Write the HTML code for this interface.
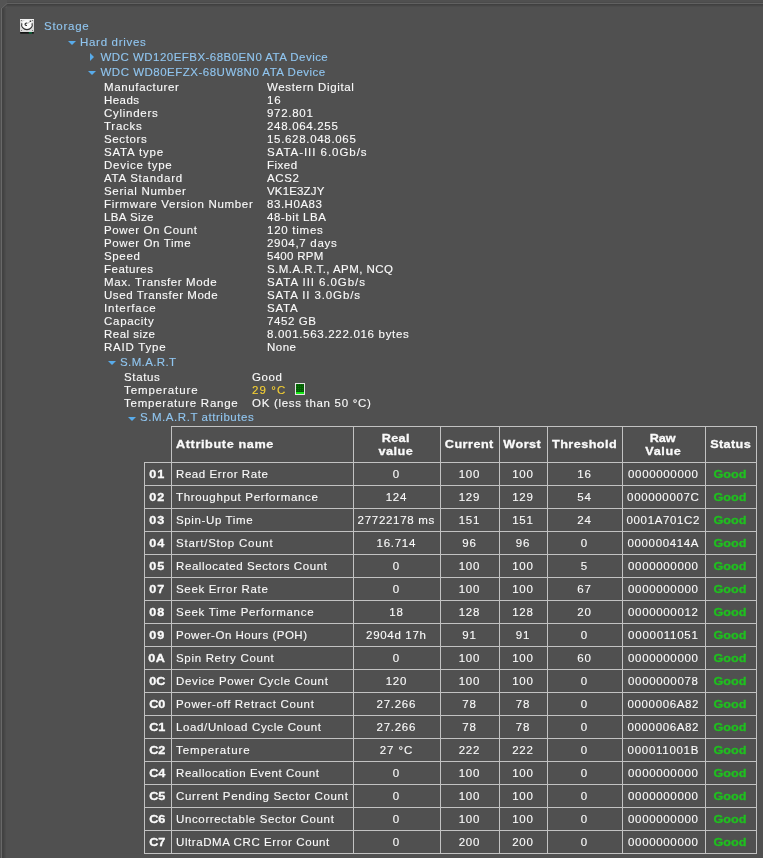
<!DOCTYPE html>
<html><head><meta charset="utf-8"><title>Storage</title>
<style>
html,body{margin:0;padding:0;}
body{width:763px;height:858px;overflow:hidden;background:#505050;position:relative;font-family:"Liberation Sans",sans-serif;font-size:11.5px;line-height:13px;color:#fafafa;letter-spacing:0.55px;}
#wrap{-webkit-text-stroke:0.12px;}
.t{position:absolute;white-space:nowrap;height:13px;}
.b{color:#90c5ef;}
.y{color:#f4cf34;}
.ad{position:absolute;width:0;height:0;margin-left:-0.5px;border-left:4px solid transparent;border-right:4px solid transparent;border-top:4.5px solid #58abea;}
.ar{position:absolute;width:0;height:0;margin-top:-0.5px;border-top:4px solid transparent;border-bottom:4px solid transparent;border-left:4.5px solid #58abea;}
.f{position:absolute;}
table{position:absolute;left:144px;top:426px;border-collapse:collapse;table-layout:fixed;}
td,th{border:1px solid #c2c2c2;padding:0 2px 0 0;height:22px;text-align:center;overflow:hidden;white-space:nowrap;}
th{font-weight:bold;-webkit-text-stroke:0.3px;}
td.n{text-align:left;padding:0 0 0 4px;}
td.g{color:#1fc01f;font-weight:bold;-webkit-text-stroke:0.3px;}
td.i{font-weight:bold;-webkit-text-stroke:0.3px;}
th.e{border:none;border-bottom:1px solid #c2c2c2;border-right:1px solid #c2c2c2;}
</style></head><body><div id="wrap" style="position:absolute;left:0;top:0;width:763px;height:858px;will-change:transform;">

<div class="f" style="left:6px;top:2px;width:757px;height:1px;background:#4b4b4b"></div>
<div class="f" style="left:6px;top:3px;width:757px;height:1px;background:#616161"></div>
<div class="f" style="left:6px;top:4px;width:757px;height:1px;background:#404040"></div>
<div class="f" style="left:6px;top:5px;width:757px;height:1px;background:#464646"></div>
<div class="f" style="left:6px;top:6px;width:757px;height:1px;background:#4c4c4c"></div>
<div class="f" style="left:1px;top:8px;width:1px;height:850px;background:#686868"></div>
<div class="f" style="left:2px;top:8px;width:1px;height:850px;background:#424242"></div>
<div class="f" style="left:3px;top:8px;width:1px;height:850px;background:#434343"></div>
<div class="f" style="left:4px;top:8px;width:1px;height:850px;background:#484848"></div>
<div class="f" style="left:5px;top:8px;width:1px;height:850px;background:#4c4c4c"></div>
<svg class="f" style="left:0;top:0" width="8" height="9" viewBox="0 0 8 9"><rect width="7" height="8" fill="#545454"/><path d="M1.5 8.5 L7 3.5" stroke="#666" stroke-width="1"/><path d="M2.7 8.8 L7.6 4.6" stroke="#474747" stroke-width="1.2"/></svg>
<svg style="position:absolute;left:19px;top:18px" width="16" height="17" viewBox="0 0 16 17">
<rect x="1" y="1" width="14" height="13" rx="0.8" fill="#dadada"/>
<rect x="1" y="1" width="14" height="1" fill="#f2f2f2"/>
<rect x="1.2" y="14" width="13.6" height="1.7" fill="#141414"/>
<rect x="9.8" y="14" width="3.2" height="1.7" fill="#0b6338"/>
<ellipse cx="7.95" cy="7.1" rx="5.5" ry="5" fill="#fbfbfb"/>
<path d="M2.9 5.2 A5.3 4.9 0 1 0 13 5.2" fill="none" stroke="#303030" stroke-width="1.1"/>
<path d="M7.9 7.3 A1.3 1.2 0 1 1 8.2 5.3" fill="none" stroke="#2a2a2a" stroke-width="1.1"/>
<path d="M8.4 5.6 L11 3.7" stroke="#a8a8a8" stroke-width="0.9"/>
<circle cx="11.4" cy="3.3" r="0.75" fill="#2a2a2a"/>
<circle cx="2.4" cy="2.4" r="0.5" fill="#555"/><circle cx="13.6" cy="2.4" r="0.5" fill="#555"/>
<circle cx="2.4" cy="12.4" r="0.5" fill="#555"/><circle cx="13.6" cy="12.4" r="0.5" fill="#555"/>
</svg>
<div class="t b" style="left:44px;top:20px;letter-spacing:0.746px;">Storage</div>
<div class="ad" style="left:68px;top:41px"></div>
<div class="t b" style="left:80px;top:36px;letter-spacing:0.699px;">Hard drives</div>
<div class="ar" style="left:90px;top:53.5px"></div>
<div class="t b" style="left:100.5px;top:51px;letter-spacing:0.459px;">WDC WD120EFBX-68B0EN0 ATA Device</div>
<div class="ad" style="left:88px;top:71px"></div>
<div class="t b" style="left:100.5px;top:66px;letter-spacing:0.497px;">WDC WD80EFZX-68UW8N0 ATA Device</div>
<div class="t " style="left:104px;top:81px;letter-spacing:0.645px;">Manufacturer</div>
<div class="t " style="left:267px;top:81px;letter-spacing:0.649px;">Western Digital</div>
<div class="t " style="left:104px;top:94px;letter-spacing:0.45px;">Heads</div>
<div class="t " style="left:267px;top:94px;letter-spacing:0.852px;">16</div>
<div class="t " style="left:104px;top:107px;letter-spacing:0.729px;">Cylinders</div>
<div class="t " style="left:267px;top:107px;letter-spacing:0.703px;">972.801</div>
<div class="t " style="left:104px;top:120px;letter-spacing:0.737px;">Tracks</div>
<div class="t " style="left:267px;top:120px;letter-spacing:0.686px;">248.064.255</div>
<div class="t " style="left:104px;top:133px;letter-spacing:0.643px;">Sectors</div>
<div class="t " style="left:267px;top:133px;letter-spacing:0.682px;">15.628.048.065</div>
<div class="t " style="left:104px;top:146px;letter-spacing:0.804px;">SATA type</div>
<div class="t " style="left:267px;top:146px;letter-spacing:0.955px;">SATA-III 6.0Gb/s</div>
<div class="t " style="left:104px;top:159px;letter-spacing:0.764px;">Device type</div>
<div class="t " style="left:267px;top:159px;letter-spacing:0.475px;">Fixed</div>
<div class="t " style="left:104px;top:172px;letter-spacing:0.747px;">ATA Standard</div>
<div class="t " style="left:267px;top:172px;letter-spacing:0.613px;">ACS2</div>
<div class="t " style="left:104px;top:185px;letter-spacing:0.692px;">Serial Number</div>
<div class="t " style="left:267px;top:185px;letter-spacing:0.156px;">VK1E3ZJY</div>
<div class="t " style="left:104px;top:198px;letter-spacing:0.692px;">Firmware Version Number</div>
<div class="t " style="left:267px;top:198px;letter-spacing:0.543px;">83.H0A83</div>
<div class="t " style="left:104px;top:211px;letter-spacing:0.398px;">LBA Size</div>
<div class="t " style="left:267px;top:211px;letter-spacing:0.58px;">48-bit LBA</div>
<div class="t " style="left:104px;top:224px;letter-spacing:0.606px;">Power On Count</div>
<div class="t " style="left:267px;top:224px;letter-spacing:0.738px;">120 times</div>
<div class="t " style="left:104px;top:237px;letter-spacing:0.618px;">Power On Time</div>
<div class="t " style="left:267px;top:237px;letter-spacing:0.712px;">2904,7 days</div>
<div class="t " style="left:104px;top:250px;letter-spacing:0.647px;">Speed</div>
<div class="t " style="left:267px;top:250px;letter-spacing:0.27px;">5400 RPM</div>
<div class="t " style="left:104px;top:263px;letter-spacing:0.514px;">Features</div>
<div class="t " style="left:267px;top:263px;letter-spacing:0.439px;">S.M.A.R.T., APM, NCQ</div>
<div class="t " style="left:104px;top:276px;letter-spacing:0.613px;">Max. Transfer Mode</div>
<div class="t " style="left:267px;top:276px;letter-spacing:0.933px;">SATA III 6.0Gb/s</div>
<div class="t " style="left:104px;top:289px;letter-spacing:0.561px;">Used Transfer Mode</div>
<div class="t " style="left:267px;top:289px;letter-spacing:0.874px;">SATA II 3.0Gb/s</div>
<div class="t " style="left:104px;top:302px;letter-spacing:0.861px;">Interface</div>
<div class="t " style="left:267px;top:302px;letter-spacing:0.789px;">SATA</div>
<div class="t " style="left:104px;top:315px;letter-spacing:0.719px;">Capacity</div>
<div class="t " style="left:267px;top:315px;letter-spacing:0.585px;">7452 GB</div>
<div class="t " style="left:104px;top:328px;letter-spacing:0.465px;">Real size</div>
<div class="t " style="left:267px;top:328px;letter-spacing:0.691px;">8.001.563.222.016 bytes</div>
<div class="t " style="left:104px;top:341px;letter-spacing:0.766px;">RAID Type</div>
<div class="t " style="left:267px;top:341px;letter-spacing:0.5px;">None</div>
<div class="ad" style="left:108px;top:360.5px"></div>
<div class="t b" style="left:120px;top:356px;letter-spacing:0.385px;">S.M.A.R.T</div>
<div class="t " style="left:124px;top:371px;letter-spacing:0.648px;">Status</div>
<div class="t " style="left:252px;top:371px;letter-spacing:0.59px;">Good</div>
<div class="t " style="left:124px;top:384px;letter-spacing:0.903px;">Temperature</div>
<div class="t y" style="left:252px;top:384px;letter-spacing:1.122px;">29 °C</div>
<div class="t " style="left:124px;top:397px;letter-spacing:0.756px;">Temperature Range</div>
<div class="t " style="left:252px;top:397px;letter-spacing:0.695px;">OK (less than 50 °C)</div>
<svg style="position:absolute;left:295px;top:383px" width="10" height="12" viewBox="0 0 10 12">
<rect x="0" y="0" width="10" height="12" fill="#e4e4e4"/>
<rect x="1" y="1" width="8" height="10" fill="#0a7a0a"/>
<path d="M2.5 1V9M4.5 1V9M6.5 1V9M8.5 1V9M1 2.5H9M1 4.5H9M1 6.5H9M1 8.5H9" stroke="#044e04" stroke-width="1" opacity="0.7"/>
<rect x="1" y="9" width="8" height="2" fill="#18e818"/>
</svg>
<div class="ad" style="left:128px;top:417px"></div>
<div class="t b" style="left:140px;top:411px;letter-spacing:0.548px;">S.M.A.R.T attributes</div>
<table><colgroup><col style="width:27px"><col style="width:182px"><col style="width:87px"><col style="width:59px"><col style="width:48px"><col style="width:75px"><col style="width:83px"><col style="width:51px"></colgroup>
<tr style="height:36px"><th class="e"></th><th style="text-align:left;padding-left:4px"><span style="display:inline-block;transform:scaleX(1.1);transform-origin:left;letter-spacing:0.567px;margin-right:-0.567px">Attribute name</span></th><th><span style="display:inline-block;transform:scaleX(1.1);transform-origin:center;letter-spacing:0.289px;margin-right:-0.289px">Real</span><br><span style="display:inline-block;transform:scaleX(1.1);transform-origin:center;letter-spacing:0.479px;margin-right:-0.479px">value</span></th><th><span style="display:inline-block;transform:scaleX(1.1);transform-origin:center;letter-spacing:0.431px;margin-right:-0.431px">Current</span></th><th><span style="display:inline-block;transform:scaleX(1.1);transform-origin:center;letter-spacing:0.434px;margin-right:-0.434px">Worst</span></th><th><span style="display:inline-block;transform:scaleX(1.1);transform-origin:center;letter-spacing:0.389px;margin-right:-0.389px">Threshold</span></th><th><span style="display:inline-block;transform:scaleX(1.1);transform-origin:center;letter-spacing:-0.158px;margin-right:0.158px">Raw</span><br><span style="display:inline-block;transform:scaleX(1.1);transform-origin:center;letter-spacing:0.533px;margin-right:-0.533px">Value</span></th><th><span style="display:inline-block;transform:scaleX(1.1);transform-origin:center;letter-spacing:0.353px;margin-right:-0.353px">Status</span></th></tr>
<tr><td class="i"><span style="display:inline-block;transform:scaleX(1.1);transform-origin:center;letter-spacing:0.874px;margin-right:-0.874px">01</span></td><td class="n"><span style="letter-spacing:0.584px;margin-right:-0.584px">Read Error Rate</span></td><td><span style="letter-spacing:1.094px;margin-right:-1.094px">0</span></td><td><span style="letter-spacing:0.771px;margin-right:-0.771px">100</span></td><td><span style="letter-spacing:0.771px;margin-right:-0.771px">100</span></td><td><span style="letter-spacing:0.852px;margin-right:-0.852px">16</span></td><td><span style="letter-spacing:0.653px;margin-right:-0.653px">0000000000</span></td><td class="g"><span style="display:inline-block;transform:scaleX(1.1);transform-origin:center;letter-spacing:-0.008px;margin-right:0.008px">Good</span></td></tr>
<tr><td class="i"><span style="display:inline-block;transform:scaleX(1.1);transform-origin:center;letter-spacing:0.874px;margin-right:-0.874px">02</span></td><td class="n"><span style="letter-spacing:0.665px;margin-right:-0.665px">Throughput Performance</span></td><td><span style="letter-spacing:0.771px;margin-right:-0.771px">124</span></td><td><span style="letter-spacing:0.771px;margin-right:-0.771px">129</span></td><td><span style="letter-spacing:0.771px;margin-right:-0.771px">129</span></td><td><span style="letter-spacing:0.852px;margin-right:-0.852px">54</span></td><td><span style="letter-spacing:0.662px;margin-right:-0.662px">000000007C</span></td><td class="g"><span style="display:inline-block;transform:scaleX(1.1);transform-origin:center;letter-spacing:-0.008px;margin-right:0.008px">Good</span></td></tr>
<tr><td class="i"><span style="display:inline-block;transform:scaleX(1.1);transform-origin:center;letter-spacing:0.874px;margin-right:-0.874px">03</span></td><td class="n"><span style="letter-spacing:0.635px;margin-right:-0.635px">Spin-Up Time</span></td><td><span style="letter-spacing:0.709px;margin-right:-0.709px">27722178 ms</span></td><td><span style="letter-spacing:0.771px;margin-right:-0.771px">151</span></td><td><span style="letter-spacing:0.771px;margin-right:-0.771px">151</span></td><td><span style="letter-spacing:0.852px;margin-right:-0.852px">24</span></td><td><span style="letter-spacing:0.634px;margin-right:-0.634px">0001A701C2</span></td><td class="g"><span style="display:inline-block;transform:scaleX(1.1);transform-origin:center;letter-spacing:-0.008px;margin-right:0.008px">Good</span></td></tr>
<tr><td class="i"><span style="display:inline-block;transform:scaleX(1.1);transform-origin:center;letter-spacing:0.874px;margin-right:-0.874px">04</span></td><td class="n"><span style="letter-spacing:0.779px;margin-right:-0.779px">Start/Stop Count</span></td><td><span style="letter-spacing:0.719px;margin-right:-0.719px">16.714</span></td><td><span style="letter-spacing:0.852px;margin-right:-0.852px">96</span></td><td><span style="letter-spacing:0.852px;margin-right:-0.852px">96</span></td><td><span style="letter-spacing:1.094px;margin-right:-1.094px">0</span></td><td><span style="letter-spacing:0.627px;margin-right:-0.627px">000000414A</span></td><td class="g"><span style="display:inline-block;transform:scaleX(1.1);transform-origin:center;letter-spacing:-0.008px;margin-right:0.008px">Good</span></td></tr>
<tr><td class="i"><span style="display:inline-block;transform:scaleX(1.1);transform-origin:center;letter-spacing:0.874px;margin-right:-0.874px">05</span></td><td class="n"><span style="letter-spacing:0.588px;margin-right:-0.588px">Reallocated Sectors Count</span></td><td><span style="letter-spacing:1.094px;margin-right:-1.094px">0</span></td><td><span style="letter-spacing:0.771px;margin-right:-0.771px">100</span></td><td><span style="letter-spacing:0.771px;margin-right:-0.771px">100</span></td><td><span style="letter-spacing:1.094px;margin-right:-1.094px">5</span></td><td><span style="letter-spacing:0.653px;margin-right:-0.653px">0000000000</span></td><td class="g"><span style="display:inline-block;transform:scaleX(1.1);transform-origin:center;letter-spacing:-0.008px;margin-right:0.008px">Good</span></td></tr>
<tr><td class="i"><span style="display:inline-block;transform:scaleX(1.1);transform-origin:center;letter-spacing:0.874px;margin-right:-0.874px">07</span></td><td class="n"><span style="letter-spacing:0.67px;margin-right:-0.67px">Seek Error Rate</span></td><td><span style="letter-spacing:1.094px;margin-right:-1.094px">0</span></td><td><span style="letter-spacing:0.771px;margin-right:-0.771px">100</span></td><td><span style="letter-spacing:0.771px;margin-right:-0.771px">100</span></td><td><span style="letter-spacing:0.852px;margin-right:-0.852px">67</span></td><td><span style="letter-spacing:0.653px;margin-right:-0.653px">0000000000</span></td><td class="g"><span style="display:inline-block;transform:scaleX(1.1);transform-origin:center;letter-spacing:-0.008px;margin-right:0.008px">Good</span></td></tr>
<tr><td class="i"><span style="display:inline-block;transform:scaleX(1.1);transform-origin:center;letter-spacing:0.874px;margin-right:-0.874px">08</span></td><td class="n"><span style="letter-spacing:0.711px;margin-right:-0.711px">Seek Time Performance</span></td><td><span style="letter-spacing:0.852px;margin-right:-0.852px">18</span></td><td><span style="letter-spacing:0.771px;margin-right:-0.771px">128</span></td><td><span style="letter-spacing:0.771px;margin-right:-0.771px">128</span></td><td><span style="letter-spacing:0.852px;margin-right:-0.852px">20</span></td><td><span style="letter-spacing:0.653px;margin-right:-0.653px">0000000012</span></td><td class="g"><span style="display:inline-block;transform:scaleX(1.1);transform-origin:center;letter-spacing:-0.008px;margin-right:0.008px">Good</span></td></tr>
<tr><td class="i"><span style="display:inline-block;transform:scaleX(1.1);transform-origin:center;letter-spacing:0.874px;margin-right:-0.874px">09</span></td><td class="n"><span style="letter-spacing:0.504px;margin-right:-0.504px">Power-On Hours (POH)</span></td><td><span style="letter-spacing:0.681px;margin-right:-0.681px">2904d 17h</span></td><td><span style="letter-spacing:0.852px;margin-right:-0.852px">91</span></td><td><span style="letter-spacing:0.852px;margin-right:-0.852px">91</span></td><td><span style="letter-spacing:1.094px;margin-right:-1.094px">0</span></td><td><span style="letter-spacing:0.739px;margin-right:-0.739px">0000011051</span></td><td class="g"><span style="display:inline-block;transform:scaleX(1.1);transform-origin:center;letter-spacing:-0.008px;margin-right:0.008px">Good</span></td></tr>
<tr><td class="i"><span style="display:inline-block;transform:scaleX(1.1);transform-origin:center;letter-spacing:0.376px;margin-right:-0.376px">0A</span></td><td class="n"><span style="letter-spacing:0.683px;margin-right:-0.683px">Spin Retry Count</span></td><td><span style="letter-spacing:1.094px;margin-right:-1.094px">0</span></td><td><span style="letter-spacing:0.771px;margin-right:-0.771px">100</span></td><td><span style="letter-spacing:0.771px;margin-right:-0.771px">100</span></td><td><span style="letter-spacing:0.852px;margin-right:-0.852px">60</span></td><td><span style="letter-spacing:0.653px;margin-right:-0.653px">0000000000</span></td><td class="g"><span style="display:inline-block;transform:scaleX(1.1);transform-origin:center;letter-spacing:-0.008px;margin-right:0.008px">Good</span></td></tr>
<tr><td class="i"><span style="display:inline-block;transform:scaleX(1.1);transform-origin:center;letter-spacing:-0.079px;margin-right:0.079px">0C</span></td><td class="n"><span style="letter-spacing:0.655px;margin-right:-0.655px">Device Power Cycle Count</span></td><td><span style="letter-spacing:0.771px;margin-right:-0.771px">120</span></td><td><span style="letter-spacing:0.771px;margin-right:-0.771px">100</span></td><td><span style="letter-spacing:0.771px;margin-right:-0.771px">100</span></td><td><span style="letter-spacing:1.094px;margin-right:-1.094px">0</span></td><td><span style="letter-spacing:0.653px;margin-right:-0.653px">0000000078</span></td><td class="g"><span style="display:inline-block;transform:scaleX(1.1);transform-origin:center;letter-spacing:-0.008px;margin-right:0.008px">Good</span></td></tr>
<tr><td class="i"><span style="display:inline-block;transform:scaleX(1.1);transform-origin:center;letter-spacing:-0.079px;margin-right:0.079px">C0</span></td><td class="n"><span style="letter-spacing:0.667px;margin-right:-0.667px">Power-off Retract Count</span></td><td><span style="letter-spacing:0.719px;margin-right:-0.719px">27.266</span></td><td><span style="letter-spacing:0.852px;margin-right:-0.852px">78</span></td><td><span style="letter-spacing:0.852px;margin-right:-0.852px">78</span></td><td><span style="letter-spacing:1.094px;margin-right:-1.094px">0</span></td><td><span style="letter-spacing:0.627px;margin-right:-0.627px">0000006A82</span></td><td class="g"><span style="display:inline-block;transform:scaleX(1.1);transform-origin:center;letter-spacing:-0.008px;margin-right:0.008px">Good</span></td></tr>
<tr><td class="i"><span style="display:inline-block;transform:scaleX(1.1);transform-origin:center;letter-spacing:-0.079px;margin-right:0.079px">C1</span></td><td class="n"><span style="letter-spacing:0.628px;margin-right:-0.628px">Load/Unload Cycle Count</span></td><td><span style="letter-spacing:0.719px;margin-right:-0.719px">27.266</span></td><td><span style="letter-spacing:0.852px;margin-right:-0.852px">78</span></td><td><span style="letter-spacing:0.852px;margin-right:-0.852px">78</span></td><td><span style="letter-spacing:1.094px;margin-right:-1.094px">0</span></td><td><span style="letter-spacing:0.627px;margin-right:-0.627px">0000006A82</span></td><td class="g"><span style="display:inline-block;transform:scaleX(1.1);transform-origin:center;letter-spacing:-0.008px;margin-right:0.008px">Good</span></td></tr>
<tr><td class="i"><span style="display:inline-block;transform:scaleX(1.1);transform-origin:center;letter-spacing:-0.079px;margin-right:0.079px">C2</span></td><td class="n"><span style="letter-spacing:0.903px;margin-right:-0.903px">Temperature</span></td><td><span style="letter-spacing:0.922px;margin-right:-0.922px">27 °C</span></td><td><span style="letter-spacing:0.771px;margin-right:-0.771px">222</span></td><td><span style="letter-spacing:0.771px;margin-right:-0.771px">222</span></td><td><span style="letter-spacing:1.094px;margin-right:-1.094px">0</span></td><td><span style="letter-spacing:0.711px;margin-right:-0.711px">000011001B</span></td><td class="g"><span style="display:inline-block;transform:scaleX(1.1);transform-origin:center;letter-spacing:-0.008px;margin-right:0.008px">Good</span></td></tr>
<tr><td class="i"><span style="display:inline-block;transform:scaleX(1.1);transform-origin:center;letter-spacing:-0.079px;margin-right:0.079px">C4</span></td><td class="n"><span style="letter-spacing:0.572px;margin-right:-0.572px">Reallocation Event Count</span></td><td><span style="letter-spacing:1.094px;margin-right:-1.094px">0</span></td><td><span style="letter-spacing:0.771px;margin-right:-0.771px">100</span></td><td><span style="letter-spacing:0.771px;margin-right:-0.771px">100</span></td><td><span style="letter-spacing:1.094px;margin-right:-1.094px">0</span></td><td><span style="letter-spacing:0.653px;margin-right:-0.653px">0000000000</span></td><td class="g"><span style="display:inline-block;transform:scaleX(1.1);transform-origin:center;letter-spacing:-0.008px;margin-right:0.008px">Good</span></td></tr>
<tr><td class="i"><span style="display:inline-block;transform:scaleX(1.1);transform-origin:center;letter-spacing:-0.079px;margin-right:0.079px">C5</span></td><td class="n"><span style="letter-spacing:0.658px;margin-right:-0.658px">Current Pending Sector Count</span></td><td><span style="letter-spacing:1.094px;margin-right:-1.094px">0</span></td><td><span style="letter-spacing:0.771px;margin-right:-0.771px">100</span></td><td><span style="letter-spacing:0.771px;margin-right:-0.771px">100</span></td><td><span style="letter-spacing:1.094px;margin-right:-1.094px">0</span></td><td><span style="letter-spacing:0.653px;margin-right:-0.653px">0000000000</span></td><td class="g"><span style="display:inline-block;transform:scaleX(1.1);transform-origin:center;letter-spacing:-0.008px;margin-right:0.008px">Good</span></td></tr>
<tr><td class="i"><span style="display:inline-block;transform:scaleX(1.1);transform-origin:center;letter-spacing:-0.079px;margin-right:0.079px">C6</span></td><td class="n"><span style="letter-spacing:0.638px;margin-right:-0.638px">Uncorrectable Sector Count</span></td><td><span style="letter-spacing:1.094px;margin-right:-1.094px">0</span></td><td><span style="letter-spacing:0.771px;margin-right:-0.771px">100</span></td><td><span style="letter-spacing:0.771px;margin-right:-0.771px">100</span></td><td><span style="letter-spacing:1.094px;margin-right:-1.094px">0</span></td><td><span style="letter-spacing:0.653px;margin-right:-0.653px">0000000000</span></td><td class="g"><span style="display:inline-block;transform:scaleX(1.1);transform-origin:center;letter-spacing:-0.008px;margin-right:0.008px">Good</span></td></tr>
<tr><td class="i"><span style="display:inline-block;transform:scaleX(1.1);transform-origin:center;letter-spacing:-0.079px;margin-right:0.079px">C7</span></td><td class="n"><span style="letter-spacing:0.58px;margin-right:-0.58px">UltraDMA CRC Error Count</span></td><td><span style="letter-spacing:1.094px;margin-right:-1.094px">0</span></td><td><span style="letter-spacing:0.771px;margin-right:-0.771px">200</span></td><td><span style="letter-spacing:0.771px;margin-right:-0.771px">200</span></td><td><span style="letter-spacing:1.094px;margin-right:-1.094px">0</span></td><td><span style="letter-spacing:0.653px;margin-right:-0.653px">0000000000</span></td><td class="g"><span style="display:inline-block;transform:scaleX(1.1);transform-origin:center;letter-spacing:-0.008px;margin-right:0.008px">Good</span></td></tr>
</table>
</div></body></html>
